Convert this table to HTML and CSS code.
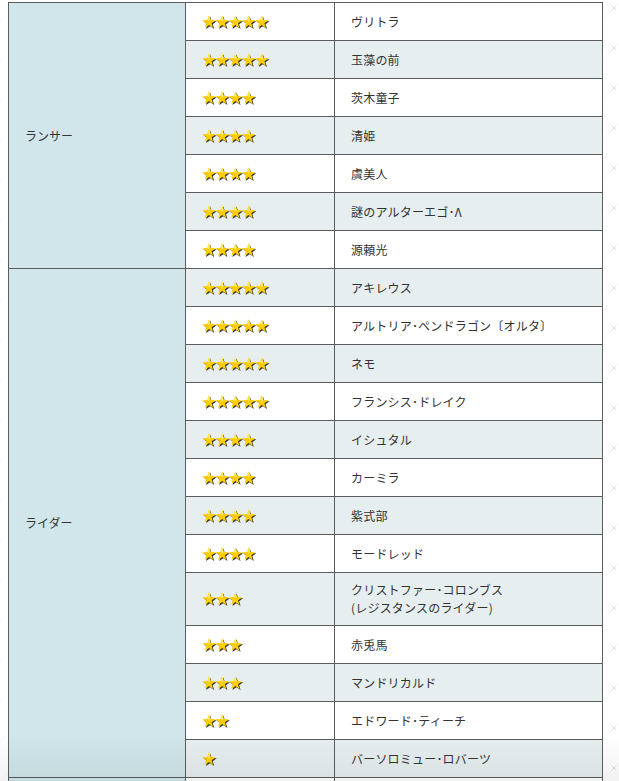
FILE: index.html
```html
<!DOCTYPE html>
<html lang="ja">
<head>
<meta charset="utf-8">
<title>サーヴァント一覧</title>
<link rel="stylesheet" href="styles.css">
</head>
<body>
<svg class="defs" width="0" height="0" aria-hidden="true">
  <defs>
    <g id="star">
      <polygon fill="#3a3a3a" transform="translate(1.1,1.1)" points="7,0.3 8.65,5.03 13.66,5.14 9.66,8.17 11.11,12.96 7,10.1 2.89,12.96 4.34,8.17 0.34,5.14 5.35,5.03"/>
      <polygon fill="#ffcc00" points="7,0.3 8.65,5.03 13.66,5.14 9.66,8.17 11.11,12.96 7,10.1 2.89,12.96 4.34,8.17 0.34,5.14 5.35,5.03"/>
      <polygon fill="#ffe45c" points="7,0.3 8.65,5.03 7,6.5 5.35,5.03"/>
    </g>
  </defs>
</svg>

<table class="servants">
  <colgroup>
    <col class="c-class">
    <col class="c-rare">
    <col class="c-name">
  </colgroup>
  <tbody>
    <tr class="w">
      <td class="cls" rowspan="7">ランサー</td>
      <td class="rare"><svg class="stars" width="68" height="15" viewBox="0 0 68 15"><use href="#star" x="0"/><use href="#star" x="13.2"/><use href="#star" x="26.4"/><use href="#star" x="39.6"/><use href="#star" x="52.8"/></svg></td>
      <td class="name">ヴリトラ</td>
    </tr>
    <tr class="g">
      <td class="rare"><svg class="stars" width="68" height="15" viewBox="0 0 68 15"><use href="#star" x="0"/><use href="#star" x="13.2"/><use href="#star" x="26.4"/><use href="#star" x="39.6"/><use href="#star" x="52.8"/></svg></td>
      <td class="name">玉藻の前</td>
    </tr>
    <tr class="w">
      <td class="rare"><svg class="stars" width="55" height="15" viewBox="0 0 55 15"><use href="#star" x="0"/><use href="#star" x="13.2"/><use href="#star" x="26.4"/><use href="#star" x="39.6"/></svg></td>
      <td class="name">茨木童子</td>
    </tr>
    <tr class="g">
      <td class="rare"><svg class="stars" width="55" height="15" viewBox="0 0 55 15"><use href="#star" x="0"/><use href="#star" x="13.2"/><use href="#star" x="26.4"/><use href="#star" x="39.6"/></svg></td>
      <td class="name">清姫</td>
    </tr>
    <tr class="w">
      <td class="rare"><svg class="stars" width="55" height="15" viewBox="0 0 55 15"><use href="#star" x="0"/><use href="#star" x="13.2"/><use href="#star" x="26.4"/><use href="#star" x="39.6"/></svg></td>
      <td class="name">虞美人</td>
    </tr>
    <tr class="g">
      <td class="rare"><svg class="stars" width="55" height="15" viewBox="0 0 55 15"><use href="#star" x="0"/><use href="#star" x="13.2"/><use href="#star" x="26.4"/><use href="#star" x="39.6"/></svg></td>
      <td class="name">謎のアルターエゴ･Λ</td>
    </tr>
    <tr class="w">
      <td class="rare"><svg class="stars" width="55" height="15" viewBox="0 0 55 15"><use href="#star" x="0"/><use href="#star" x="13.2"/><use href="#star" x="26.4"/><use href="#star" x="39.6"/></svg></td>
      <td class="name">源頼光</td>
    </tr>

    <tr class="g">
      <td class="cls" rowspan="13">ライダー</td>
      <td class="rare"><svg class="stars" width="68" height="15" viewBox="0 0 68 15"><use href="#star" x="0"/><use href="#star" x="13.2"/><use href="#star" x="26.4"/><use href="#star" x="39.6"/><use href="#star" x="52.8"/></svg></td>
      <td class="name">アキレウス</td>
    </tr>
    <tr class="w">
      <td class="rare"><svg class="stars" width="68" height="15" viewBox="0 0 68 15"><use href="#star" x="0"/><use href="#star" x="13.2"/><use href="#star" x="26.4"/><use href="#star" x="39.6"/><use href="#star" x="52.8"/></svg></td>
      <td class="name">アルトリア･ペンドラゴン〔オルタ〕</td>
    </tr>
    <tr class="g">
      <td class="rare"><svg class="stars" width="68" height="15" viewBox="0 0 68 15"><use href="#star" x="0"/><use href="#star" x="13.2"/><use href="#star" x="26.4"/><use href="#star" x="39.6"/><use href="#star" x="52.8"/></svg></td>
      <td class="name">ネモ</td>
    </tr>
    <tr class="w">
      <td class="rare"><svg class="stars" width="68" height="15" viewBox="0 0 68 15"><use href="#star" x="0"/><use href="#star" x="13.2"/><use href="#star" x="26.4"/><use href="#star" x="39.6"/><use href="#star" x="52.8"/></svg></td>
      <td class="name">フランシス･ドレイク</td>
    </tr>
    <tr class="g">
      <td class="rare"><svg class="stars" width="55" height="15" viewBox="0 0 55 15"><use href="#star" x="0"/><use href="#star" x="13.2"/><use href="#star" x="26.4"/><use href="#star" x="39.6"/></svg></td>
      <td class="name">イシュタル</td>
    </tr>
    <tr class="w">
      <td class="rare"><svg class="stars" width="55" height="15" viewBox="0 0 55 15"><use href="#star" x="0"/><use href="#star" x="13.2"/><use href="#star" x="26.4"/><use href="#star" x="39.6"/></svg></td>
      <td class="name">カーミラ</td>
    </tr>
    <tr class="g">
      <td class="rare"><svg class="stars" width="55" height="15" viewBox="0 0 55 15"><use href="#star" x="0"/><use href="#star" x="13.2"/><use href="#star" x="26.4"/><use href="#star" x="39.6"/></svg></td>
      <td class="name">紫式部</td>
    </tr>
    <tr class="w">
      <td class="rare"><svg class="stars" width="55" height="15" viewBox="0 0 55 15"><use href="#star" x="0"/><use href="#star" x="13.2"/><use href="#star" x="26.4"/><use href="#star" x="39.6"/></svg></td>
      <td class="name">モードレッド</td>
    </tr>
    <tr class="g">
      <td class="rare"><svg class="stars" width="42" height="15" viewBox="0 0 42 15"><use href="#star" x="0"/><use href="#star" x="13.2"/><use href="#star" x="26.4"/></svg></td>
      <td class="name">クリストファー･コロンブス<br>(レジスタンスのライダー)</td>
    </tr>
    <tr class="w">
      <td class="rare"><svg class="stars" width="42" height="15" viewBox="0 0 42 15"><use href="#star" x="0"/><use href="#star" x="13.2"/><use href="#star" x="26.4"/></svg></td>
      <td class="name">赤兎馬</td>
    </tr>
    <tr class="g">
      <td class="rare"><svg class="stars" width="42" height="15" viewBox="0 0 42 15"><use href="#star" x="0"/><use href="#star" x="13.2"/><use href="#star" x="26.4"/></svg></td>
      <td class="name">マンドリカルド</td>
    </tr>
    <tr class="w">
      <td class="rare"><svg class="stars" width="29" height="15" viewBox="0 0 29 15"><use href="#star" x="0"/><use href="#star" x="13.2"/></svg></td>
      <td class="name">エドワード･ティーチ</td>
    </tr>
    <tr class="g">
      <td class="rare"><svg class="stars" width="16" height="15" viewBox="0 0 16 15"><use href="#star" x="0"/></svg></td>
      <td class="name">バーソロミュー･ロバーツ</td>
    </tr>

    <tr class="w">
      <td class="cls"></td>
      <td class="rare"></td>
      <td class="name"></td>
    </tr>
  </tbody>
</table>

<div class="fade" aria-hidden="true"></div>
</body>
</html>
```

FILE: styles.css
```css
html, body {
  margin: 0;
  padding: 0;
}

body {
  padding: 2px 0 0 8px;
  background-color: #ffffff;
  background-image: url("data:image/svg+xml,%3Csvg xmlns='http://www.w3.org/2000/svg' width='40' height='40'%3E%3Cpath d='M17.5 17.5 L22.5 22.5 M22.5 17.5 L17.5 22.5' stroke='%23d8d8d8' stroke-width='0.8'/%3E%3Cpath d='M17.5 22.5 L0 40 M40 0 L22.5 17.5' stroke='%23f2f2f2' stroke-width='0.6'/%3E%3C/svg%3E");
  background-position: 594px -12px;
  background-repeat: repeat;
  font-family: "Noto Sans CJK JP", "Noto Sans", sans-serif;
  font-size: 12px;
  color: #333333;
  overflow: hidden;
}

.defs {
  position: absolute;
  width: 0;
  height: 0;
  overflow: hidden;
}

.servants {
  border-collapse: collapse;
  table-layout: fixed;
  width: 594px;
}

.c-class { width: 177px; }
.c-rare  { width: 149px; }
.c-name  { width: 268px; }

.servants td {
  border: 1px solid #5c5c5c;
  padding: 8px 16px;
  height: 38px;
  box-sizing: border-box;
  line-height: 18px;
  vertical-align: middle;
  text-align: left;
}

.servants tr.w td { background: #ffffff; }
.servants tr.g td { background: #e6eef0; }

.servants tr td.cls {
  background: #d0e6ea;
}

.servants td.rare {
  padding-top: 0;
  padding-bottom: 0;
}

.stars {
  display: block;
  margin-top: 1px;
}

.name {
  letter-spacing: 0.2px;
}

.fade {
  position: fixed;
  left: 0;
  right: 0;
  bottom: 0;
  height: 46px;
  background: linear-gradient(to bottom, rgba(0, 0, 0, 0), rgba(0, 0, 0, 0.05));
  pointer-events: none;
}
```
